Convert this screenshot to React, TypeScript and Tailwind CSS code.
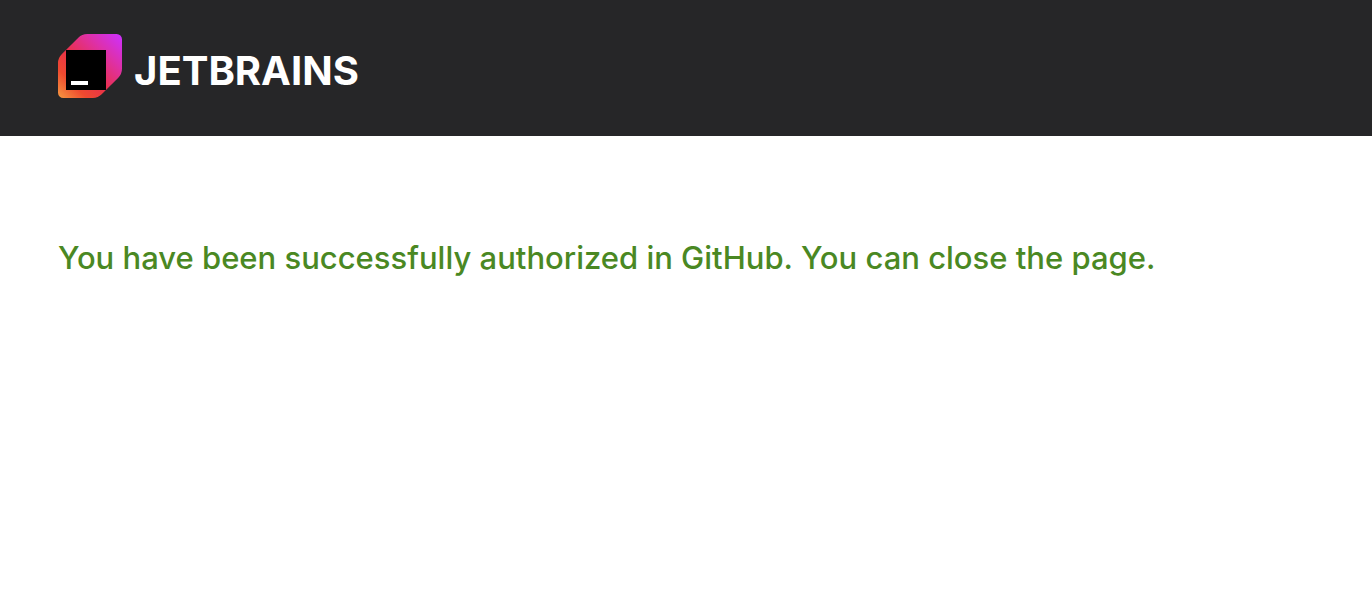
function JetBrainsMark() {
  return (
    <svg className="size-16 shrink-0" viewBox="0 0 64 64" aria-hidden="true">
      <defs>
        <linearGradient id="mark" gradientUnits="userSpaceOnUse" x1="1" y1="63" x2="62" y2="2">
          <stop offset="0" stopColor="#f59440" />
          <stop offset="0.22" stopColor="#ee4a2f" />
          <stop offset="0.45" stopColor="#e8304a" />
          <stop offset="0.7" stopColor="#e0309a" />
          <stop offset="1" stopColor="#cf30f8" />
        </linearGradient>
      </defs>
      <path
        fill="url(#mark)"
        d="M20.3 3.7 3.7 20.3A12.5 12.5 0 0 0 0 29.2V58.7A5.3 5.3 0 0 0 5.3 64H34.8A12.5 12.5 0 0 0 43.7 60.3L60.3 43.7A12.5 12.5 0 0 0 64 34.8V5.3A5.3 5.3 0 0 0 58.7 0H29.2A12.5 12.5 0 0 0 20.3 3.7Z"
      />
      <path fill="#000" d="M8 16H48V56H8Z" />
      <path fill="#fff" d="M13 47H30V51H13Z" />
    </svg>
  );
}

export default function App() {
  return (
    <div className="min-h-screen bg-white font-['Inter','Liberation_Sans',sans-serif]">
      <header className="bg-[#262628] px-[58px] pt-[34px] pb-[38px]">
        <a href="#" className="flex w-fit items-center gap-3 text-white">
          <JetBrainsMark />
          <span className="pt-2.5 text-[40px] leading-[48px] font-bold">JETBRAINS</span>
        </a>
      </header>
      <main className="px-[58px] pt-[98px]">
        <p className="text-[31px] leading-[48px] font-medium text-[#4a8823]">
          You have been successfully authorized in GitHub. You can close the page.
        </p>
      </main>
    </div>
  );
}
